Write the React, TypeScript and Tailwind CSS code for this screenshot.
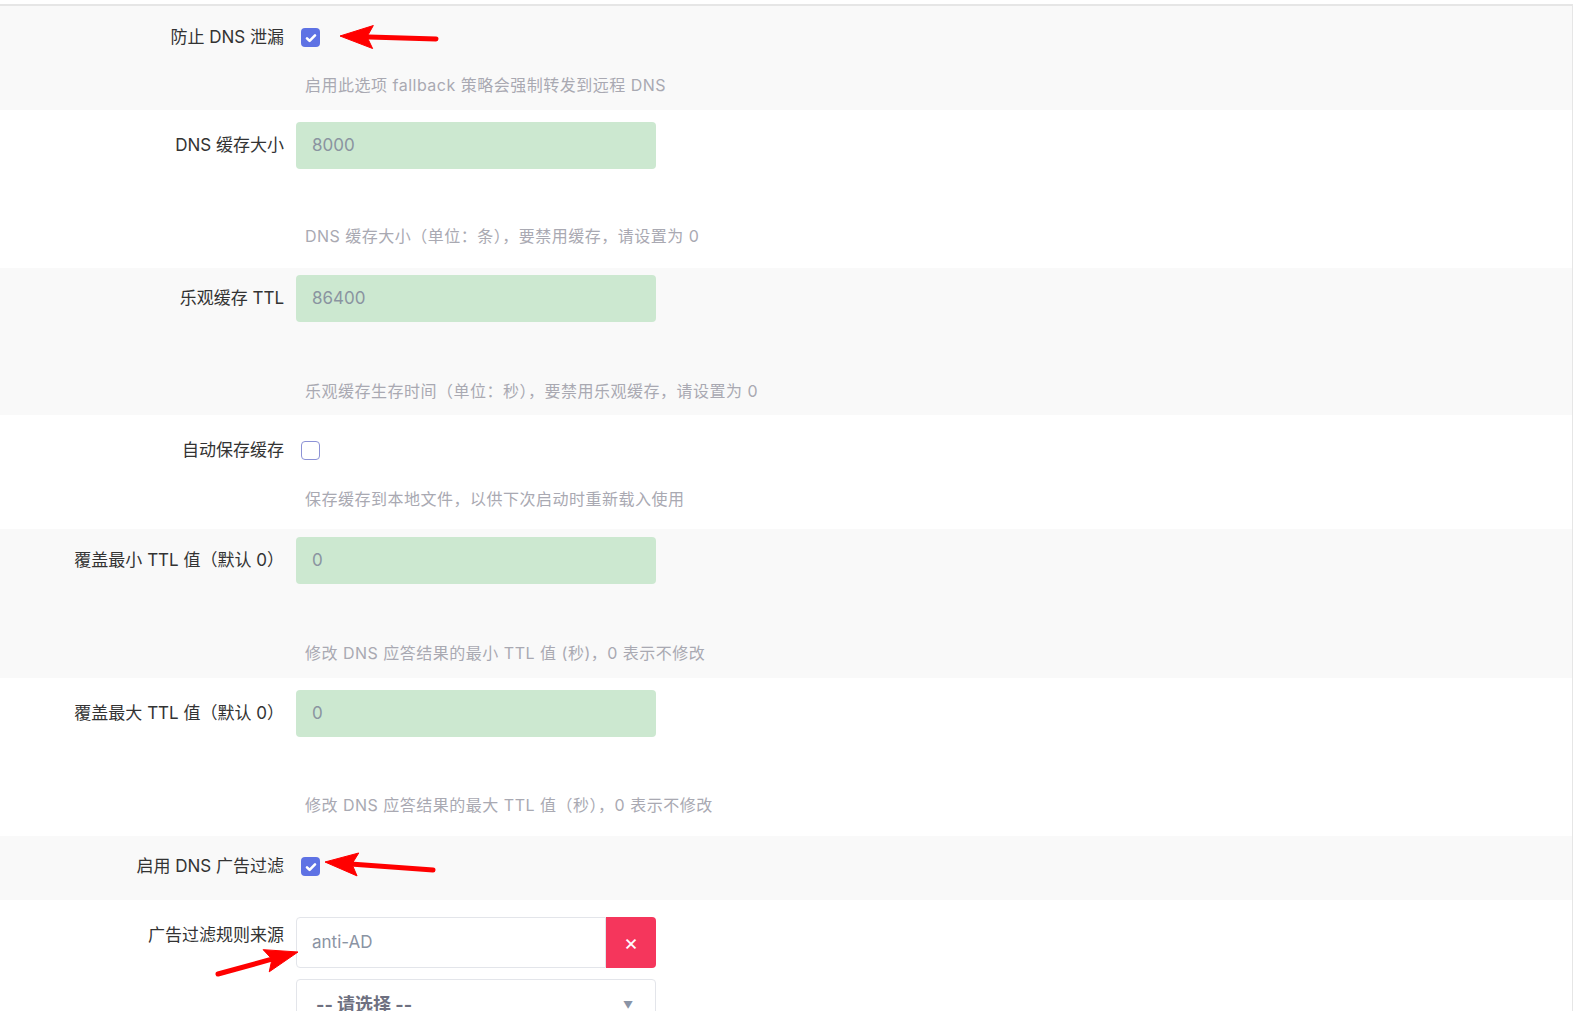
import React from 'react';

const font = "font-['Inter','Noto_Sans_CJK_SC',sans-serif]";

interface RowProps {
  label: string;
  bg: string;
  pad: string;
  descGap?: string;
  desc?: string;
  children: React.ReactNode;
}

const Row: React.FC<RowProps> = ({ label, bg, pad, descGap, desc, children }) => (
  <div className={`${bg} ${pad} flex flex-col`}>
    <div className="flex h-[47px] items-center">
      <div className="w-[284px] shrink-0 text-right text-[17px] text-[#333]">{label}</div>
      <div className="ml-[12px] flex items-center">{children}</div>
    </div>
    {desc && (
      <div className={`${descGap} ml-[305px] h-[20px] text-[16px] leading-[20px] tracking-[0.5px] text-[#a9a9b2]`}>
        {desc}
      </div>
    )}
  </div>
);

const Checkbox: React.FC<{ checked?: boolean }> = ({ checked }) =>
  checked ? (
    <div className="ml-[5px] flex h-[19px] w-[19px] items-center justify-center rounded-[4px] bg-[#5e72e4]">
      <svg width="12" height="12" viewBox="0 0 12 12">
        <path d="M2 6.3l2.6 2.6L10 3.4" fill="none" stroke="#fff" strokeWidth="2.6" strokeLinecap="round" strokeLinejoin="round" />
      </svg>
    </div>
  ) : (
    <div className="ml-[5px] h-[19px] w-[19px] rounded-[4px] border border-[#8c92d6] bg-white" />
  );

const TextBox: React.FC<{ value: string }> = ({ value }) => (
  <div className="flex h-[47px] w-[360px] items-center rounded-[4px] bg-[#cce8d0] pl-[16px] text-[17px] text-[#8a94a0]">
    {value}
  </div>
);

const Arrow: React.FC<{ tip: [number, number]; tail: [number, number] }> = ({ tip, tail }) => {
  const dx = tip[0] - tail[0];
  const dy = tip[1] - tail[1];
  const len = Math.hypot(dx, dy);
  const ux = dx / len;
  const uy = dy / len;
  const hl = 33;
  const hw = 11.5;
  const bx = tip[0] - ux * hl;
  const by = tip[1] - uy * hl;
  const px = -uy;
  const py = ux;
  return (
    <g fill="#f00" stroke="#f00">
      <line x1={tail[0]} y1={tail[1]} x2={bx + ux * 4} y2={by + uy * 4} strokeWidth="5" strokeLinecap="round" />
      <polygon
        points={`${tip[0]},${tip[1]} ${bx + px * hw},${by + py * hw} ${bx + ux * 6},${by + uy * 6} ${bx - px * hw},${by - py * hw}`}
        strokeWidth="1"
      />
    </g>
  );
};

export default function App() {
  return (
    <div className={`relative h-[1011px] w-[1575px] overflow-hidden bg-white ${font}`}>
      <div className="mt-[4px] w-[1573px] border-t-2 border-r border-[#e6e6e6]">
        <Row label="防止 DNS 泄漏" bg="bg-[#f9f9f9]" pad="pt-[8px] pb-[15px]" descGap="mt-[14px]" desc="启用此选项 fallback 策略会强制转发到远程 DNS">
          <Checkbox checked />
        </Row>
        <Row label="DNS 缓存大小" bg="bg-white" pad="pt-[12px] pb-[22px]" descGap="mt-[57px]" desc="DNS 缓存大小（单位：条），要禁用缓存，请设置为 0">
          <TextBox value="8000" />
        </Row>
        <Row label="乐观缓存 TTL" bg="bg-[#f9f9f9]" pad="pt-[7px] pb-[14px]" descGap="mt-[59px]" desc="乐观缓存生存时间（单位：秒），要禁用乐观缓存，请设置为 0">
          <TextBox value="86400" />
        </Row>
        <Row label="自动保存缓存" bg="bg-white" pad="pt-[12px] pb-[20px]" descGap="mt-[15px]" desc="保存缓存到本地文件，以供下次启动时重新载入使用">
          <Checkbox />
        </Row>
        <Row label="覆盖最小 TTL 值（默认 0）" bg="bg-[#f9f9f9]" pad="pt-[8px] pb-[15px]" descGap="mt-[59px]" desc="修改 DNS 应答结果的最小 TTL 值 (秒)，0 表示不修改">
          <TextBox value="0" />
        </Row>
        <Row label="覆盖最大 TTL 值（默认 0）" bg="bg-white" pad="pt-[12px] pb-[21px]" descGap="mt-[58px]" desc="修改 DNS 应答结果的最大 TTL 值（秒），0 表示不修改">
          <TextBox value="0" />
        </Row>
        <Row label="启用 DNS 广告过滤" bg="bg-[#f9f9f9]" pad="pt-[7px] pb-[10px]">
          <Checkbox checked />
        </Row>
        <div className="flex bg-white pt-[17px] pb-[40px]">
          <div className="w-[284px] shrink-0 pt-[6px] text-right text-[17px] text-[#333]">广告过滤规则来源</div>
          <div className="ml-[12px] flex w-[360px] flex-col gap-[11px]">
            <div className="flex h-[51px]">
              <div className="flex flex-1 items-center rounded-l-[4px] border border-[#e3e5ea] pl-[15px] text-[17px] text-[#8a93a3]">
                anti-AD
              </div>
              <div className="flex w-[50px] items-center justify-center rounded-r-[4px] bg-[#f5365c] text-[22px] text-white">
                ×
              </div>
            </div>
            <div className="flex h-[48px] items-center justify-between rounded-[4px] border border-[#e3e5ea] pl-[19px] pr-[22px]">
              <span className="pt-[4px] text-[18px] font-bold leading-[22px] text-[#6e7080]">-- 请选择 --</span>
              <span className="pt-[4px] text-[10px] text-[#8a94a6]">▼</span>
            </div>
          </div>
        </div>
      </div>
      <svg className="pointer-events-none absolute left-0 top-0" width="1575" height="1011">
        <Arrow tip={[340, 36]} tail={[436, 39]} />
        <Arrow tip={[325, 862]} tail={[433, 870]} />
        <Arrow tip={[298, 952]} tail={[218, 974]} />
      </svg>
    </div>
  );
}
